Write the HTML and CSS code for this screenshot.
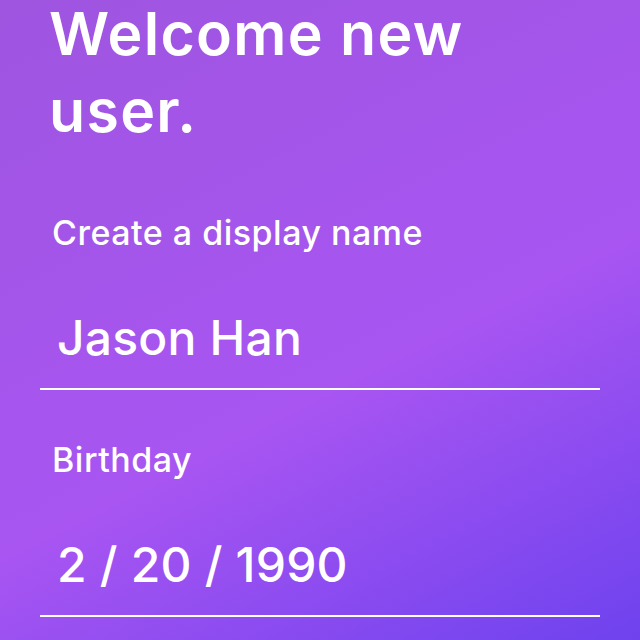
FILE: index.html
```html
<!DOCTYPE html>
<html lang="en">
<head>
<meta charset="utf-8">
<title>Welcome</title>
<link rel="stylesheet" href="styles.css">
</head>
<body>
<main class="screen">
  <h1 class="title"><span class="title-line">Welcome new</span><span class="title-line">user.</span></h1>
  <section class="field">
    <div class="label">Create a display name</div>
    <div class="value">Jason Han</div>
  </section>
  <section class="field">
    <div class="label">Birthday</div>
    <div class="value">2 / 20 / 1990</div>
  </section>
</main>
</body>
</html>
```
FILE: styles.css
```css
html, body {
  margin: 0;
  padding: 0;
  height: 100%;
}
body {
  background: linear-gradient(153deg, #9f55e0 0%, #a855f2 58%, #6e42ee 100%);
  color: #ffffff;
  font-family: Inter, "Liberation Sans", sans-serif;
  overflow: hidden;
}
.screen {
  display: flex;
  flex-direction: column;
  padding: 0 40px;
}
.title {
  display: flex;
  flex-direction: column;
  gap: 10px;
  margin: 0 0 69px 9px;
  font-weight: 600;
  font-size: 59px;
  line-height: 67px;
  letter-spacing: 1.3px;
}
.field {
  display: flex;
  flex-direction: column;
  border-bottom: 2px solid #ffffff;
}
.field + .field {
  margin-top: 50px;
}
.label {
  padding-left: 12px;
  font-weight: 500;
  font-size: 34px;
  line-height: 40px;
  letter-spacing: 0.5px;
}
.value {
  padding: 0 0 22px 17px;
  margin-top: 57px;
  font-weight: 500;
  font-size: 48px;
  line-height: 56px;
  letter-spacing: 0.2px;
}
```
